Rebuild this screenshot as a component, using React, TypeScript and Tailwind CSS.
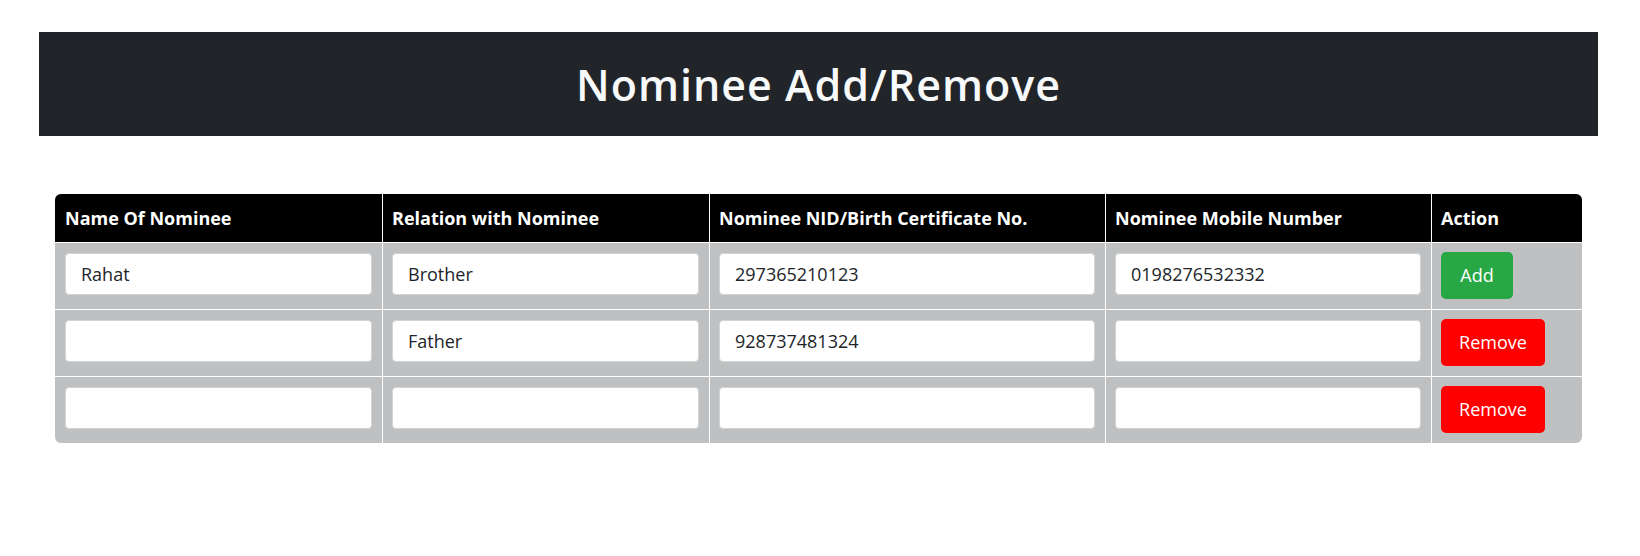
import React, { useState } from "react";

type Nominee = {
  name: string;
  relation: string;
  nid: string;
  mobile: string;
};

const font = { fontFamily: '"Open Sans", "Noto Sans", sans-serif' };

export default function App() {
  const [rows, setRows] = useState<Nominee[]>([
    { name: "Rahat", relation: "Brother", nid: "297365210123", mobile: "0198276532332" },
    { name: "", relation: "Father", nid: "928737481324", mobile: "" },
    { name: "", relation: "", nid: "", mobile: "" },
  ]);

  const update = (i: number, key: keyof Nominee, value: string) => {
    setRows((prev) => prev.map((r, idx) => (idx === i ? { ...r, [key]: value } : r)));
  };

  const addRow = () => setRows((prev) => [...prev, { name: "", relation: "", nid: "", mobile: "" }]);
  const removeRow = (i: number) => setRows((prev) => prev.filter((_, idx) => idx !== i));

  const headers = [
    "Name Of Nominee",
    "Relation with Nominee",
    "Nominee NID/Birth Certificate No.",
    "Nominee Mobile Number",
    "Action",
  ];
  const keys: (keyof Nominee)[] = ["name", "relation", "nid", "mobile"];

  return (
    <div className="min-h-[556px] bg-white pt-[32px]" style={font}>
      {/* Title banner */}
      <div className="mx-[39px] flex h-[104px] w-[1559px] items-center justify-center bg-[#212529]">
        <h1 className="text-[43px] font-semibold leading-none tracking-[1px] text-[#f8f9fa]">
          Nominee Add/Remove
        </h1>
      </div>

      {/* Nominee table */}
      <div className="ml-[55px] mt-[58px] w-[1527px] overflow-hidden rounded-[6px] bg-[#bfc0c1]">
        <div className="grid grid-cols-[327px_327px_396px_326px_151px] bg-black">
          {headers.map((h, i) => (
            <div
              key={h}
              className={
                i === 0
                  ? "flex h-[48px] items-center px-[10px] text-[18px] font-bold text-white"
                  : "flex h-[48px] items-center border-l border-white pl-[9px] pr-[10px] text-[18px] font-bold text-white"
              }
            >
              {h}
            </div>
          ))}
        </div>

        {rows.map((row, i) => (
          <div
            key={i}
            className="grid h-[67px] grid-cols-[327px_327px_396px_326px_151px] border-t border-white"
          >
            {keys.map((k, j) => (
              <div
                key={k}
                className={
                  j === 0 ? "px-[10px] pt-[10px]" : "border-l border-white pl-[9px] pr-[10px] pt-[10px]"
                }
              >
                <input
                  type="text"
                  value={row[k]}
                  onChange={(e) => update(i, k, e.target.value)}
                  className="h-[42px] w-full rounded-[4px] border border-[#d3d4d5] bg-white px-[15px] text-[18px] text-[#212529] outline-none"
                />
              </div>
            ))}
            <div className="border-l border-white pl-[9px] pr-[10px] pt-[9px]">
              {i === 0 ? (
                <button
                  onClick={addRow}
                  className="h-[47px] w-[72px] rounded-[5px] bg-[#28a745] text-[18px] text-white"
                >
                  Add
                </button>
              ) : (
                <button
                  onClick={() => removeRow(i)}
                  className="h-[47px] w-[104px] rounded-[5px] bg-[#ff0000] text-[18px] text-white"
                >
                  Remove
                </button>
              )}
            </div>
          </div>
        ))}
      </div>
    </div>
  );
}
